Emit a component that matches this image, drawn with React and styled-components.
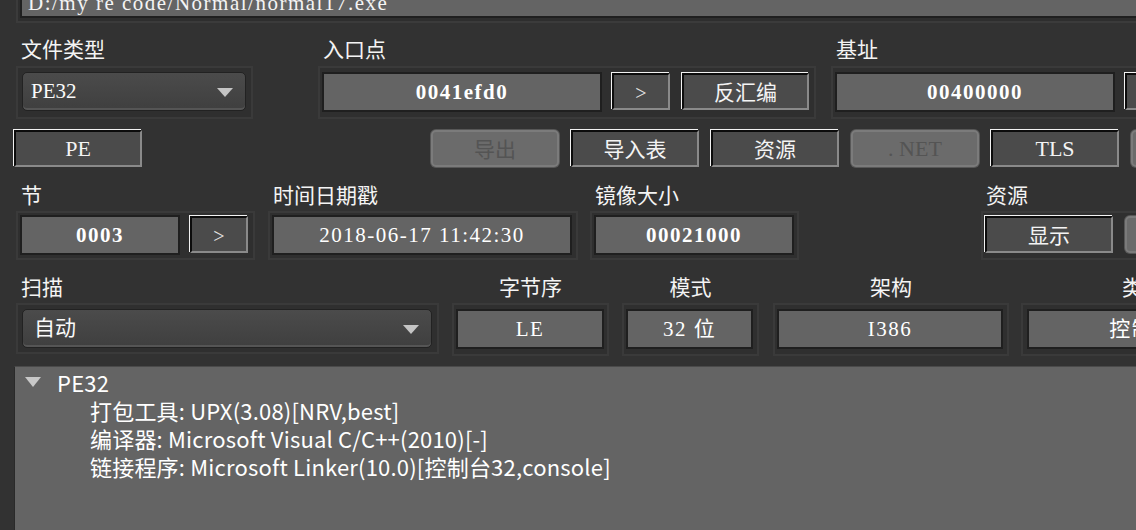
import styled, { createGlobalStyle } from 'styled-components';

const GlobalStyle = createGlobalStyle`
  html, body {
    margin: 0;
    padding: 0;
    background: #323232;
    overflow: hidden;
  }
  body {
    font-family: "Noto Sans CJK SC", "Noto Sans", sans-serif;
    color: #f2f2f2;
  }
`;

const serif = `"Liberation Serif", "Noto Sans CJK SC", serif`;

export default function App() {
  return (
    <Window>
      <GlobalStyle />
      <PathFrame>
        <PathField>D:/my re code/Normal/normal17.exe</PathField>
      </PathFrame>

      <Row $top={8}>
        <Cell $w={237}>
          <Label>文件类型</Label>
          <Frame $pad="4px 5px 6px 4px">
            <Combo>
              PE32
              <Arrow />
            </Combo>
          </Frame>
        </Cell>
        <Cell $w={498} $ml={65}>
          <Label>入口点</Label>
          <Frame $pad="4px 5px 5px 2px">
            <Field $w={280} $bold>0041efd0</Field>
            <Button $w={58} $ml={9}><Chevron>&gt;</Chevron></Button>
            <Button $w={127} $ml={11}>反汇编</Button>
          </Frame>
        </Cell>
        <Cell $w={420} $ml={15}>
          <Label>基址</Label>
          <Frame $pad="4px 5px 5px 2px">
            <Field $w={280} $bold>00400000</Field>
            <Button $w={58} $ml={9}><Chevron>&gt;</Chevron></Button>
          </Frame>
        </Cell>
      </Row>

      <ButtonRow>
        <Button $w={128} $h={37} $latin>PE</Button>
        <Button $w={128} $h={37} $ml={288} disabled>导出</Button>
        <Button $w={128} $h={37} $ml={11}>导入表</Button>
        <Button $w={128} $h={37} $ml={11}>资源</Button>
        <Button $w={128} $h={37} $ml={11} disabled $latin>. NET</Button>
        <Button $w={128} $h={37} $ml={11} $latin>TLS</Button>
        <Button $w={128} $h={37} $ml={11} disabled>调试</Button>
      </ButtonRow>

      <Row $top={10}>
        <Cell $w={239}>
          <Label $h={34}>节</Label>
          <Frame $pad="2px 5px 3px 2px">
            <Field $w={160} $bold>0003</Field>
            <Button $w={58} $ml={9}><Chevron>&gt;</Chevron></Button>
          </Frame>
        </Cell>
        <Cell $w={310} $ml={13}>
          <Label $h={34}>时间日期戳</Label>
          <Frame $pad="2px 4px 3px 2px">
            <Field $w={300}>2018-06-17 11:42:30</Field>
          </Frame>
        </Cell>
        <Cell $w={209} $ml={12}>
          <Label $h={34}>镜像大小</Label>
          <Frame $pad="2px 3px 3px 2px">
            <Field $w={200} $bold>00021000</Field>
          </Frame>
        </Cell>
        <Cell $w={300} $ml={182}>
          <Label $h={34}>资源</Label>
          <Frame $pad="2px 3px 5px 1px">
            <Button $w={128}>显示</Button>
            <Button $w={128} $ml={11} disabled>版本</Button>
          </Frame>
        </Cell>
      </Row>

      <Row $top={9}>
        <Cell $w={423}>
          <Label $h={34}>扫描</Label>
          <Frame $pad="4px 5px 4px 4px">
            <Combo $w={410} $indent={11}>
              自动
              <Arrow />
            </Combo>
          </Frame>
        </Cell>
        <Cell $w={157} $ml={13}>
          <Label $h={34} $center>字节序</Label>
          <Frame $pad="4px 3px 5px 2px">
            <Field $w={148}>LE</Field>
          </Frame>
        </Cell>
        <Cell $w={137} $ml={13}>
          <Label $h={34} $center>模式</Label>
          <Frame $pad="4px 4px 5px 2px">
            <Field $w={127}>32 位</Field>
          </Frame>
        </Cell>
        <Cell $w={236} $ml={14}>
          <Label $h={34} $center>架构</Label>
          <Frame $pad="4px 4px 5px 2px">
            <Field $w={226}>I386</Field>
          </Frame>
        </Cell>
        <Cell $w={244} $ml={12}>
          <Label $h={34} $center>类型</Label>
          <Frame $pad="4px 4px 5px 4px">
            <Field $w={232}>控制台</Field>
          </Frame>
        </Cell>
      </Row>

      <ResultPanel>
        <TreeRow>
          <TreeToggle />
          <span>PE32</span>
        </TreeRow>
        <TreeChild>打包工具: UPX(3.08)[NRV,best]</TreeChild>
        <TreeChild>编译器: Microsoft Visual C/C++(2010)[-]</TreeChild>
        <TreeChild>链接程序: Microsoft Linker(10.0)[控制台32,console]</TreeChild>
      </ResultPanel>
    </Window>
  );
}

const Window = styled.div`
  width: 1400px;
  height: 530px;
  overflow: hidden;
  background: #323232;
`;

const PathFrame = styled.div`
  margin: -26px 0 0 16px;
  width: 1300px;
  padding: 2px 2px 3px 2px;
  border: 2px solid #3b3b3b;
  background: #2e2e2e;
`;

const PathField = styled.div`
  box-sizing: border-box;
  height: 40px;
  padding: 8px 0 0 6px;
  line-height: 30px;
  border: 2px solid #1f1f1f;
  background: #646464;
  font-family: ${serif};
  font-size: 21px;
  letter-spacing: 1.5px;
  color: #f4f4f4;
  white-space: nowrap;
  overflow: hidden;
`;

const Row = styled.div`
  display: flex;
  align-items: flex-start;
  margin-top: ${(p) => p.$top || 0}px;
  margin-left: 16px;
`;

const Cell = styled.div`
  display: flex;
  flex-direction: column;
  flex: none;
  width: ${(p) => p.$w}px;
  margin-left: ${(p) => p.$ml || 0}px;
`;

const Label = styled.div`
  height: ${(p) => p.$h || 35}px;
  line-height: ${(p) => p.$h || 35}px;
  padding-left: ${(p) => (p.$center ? 0 : 5)}px;
  text-align: ${(p) => (p.$center ? 'center' : 'left')};
  font-size: 21px;
  color: #f4f4f4;
  white-space: nowrap;
`;

const Frame = styled.div`
  display: flex;
  align-items: flex-start;
  padding: ${(p) => p.$pad || '4px'};
  border: 2px solid #3a3a3a;
  background: #2f2f2f;
`;

const Field = styled.div`
  flex: none;
  box-sizing: border-box;
  width: ${(p) => p.$w}px;
  height: 40px;
  line-height: 36px;
  border: 2px solid #1f1f1f;
  background: #646464;
  text-align: center;
  font-family: ${serif};
  font-size: 21px;
  font-weight: ${(p) => (p.$bold ? 700 : 400)};
  letter-spacing: 1.5px;
  color: #ffffff;
  white-space: nowrap;
  overflow: hidden;
`;

const Combo = styled.div`
  position: relative;
  box-sizing: border-box;
  width: ${(p) => p.$w || 224}px;
  height: 39px;
  line-height: 37px;
  padding-left: ${(p) => p.$indent || 8}px;
  border: 1px solid #222;
  border-radius: 5px;
  background: linear-gradient(#4b4b4b, #3f3f3f);
  box-shadow: inset 0 -2px 0 #555;
  font-family: ${serif};
  font-size: 21px;
  color: #fafafa;
`;

const Arrow = styled.span`
  position: absolute;
  right: 12px;
  top: 15px;
  width: 0;
  height: 0;
  border-left: 8px solid transparent;
  border-right: 8px solid transparent;
  border-top: 9px solid #c4c4c4;
`;

const ButtonRow = styled.div`
  display: flex;
  margin: 10px 0 0 13px;
`;

const Button = styled.button`
  flex: none;
  box-sizing: border-box;
  width: ${(p) => p.$w}px;
  height: ${(p) => p.$h || 37}px;
  margin: 1px 0 0 ${(p) => (p.$ml || 0) + 1}px;
  padding: 0;
  border: 2px solid;
  border-color: #0c0c0c #8a8a8a #8a8a8a #0c0c0c;
  box-shadow: -1px -1px 0 #f2f2f2;
  background: #4b4b4b;
  color: #f4f4f4;
  font-family: ${(p) => (p.$latin ? serif : `"Noto Sans CJK SC", sans-serif`)};
  font-size: ${(p) => (p.$latin ? 22 : 21)}px;
  line-height: 1;
  cursor: default;

  &:disabled {
    border: 2px solid #7b7b7b;
    border-radius: 5px;
    box-shadow: 0 0 0 1px #575757;
    background: #6b6b6b;
    color: #545454;
  }
`;

const Chevron = styled.span`
  font-family: ${serif};
  font-size: 20px;
  color: #e6e6e6;
`;

const ResultPanel = styled.div`
  margin: 10px 0 0 14px;
  height: 200px;
  padding-top: 1px;
  border-top: 1px solid #4a4a4a;
  border-left: 1px solid #2a2a2a;
  background: #646464;
  font-family: "Noto Sans CJK SC", "Noto Sans", sans-serif;
  font-size: 22px;
  letter-spacing: 0.2px;
  line-height: 28px;
  color: #ffffff;
`;

const TreeRow = styled.div`
  display: flex;
  align-items: center;
  padding-left: 10px;
  gap: 16px;
`;

const TreeToggle = styled.span`
  width: 0;
  height: 0;
  border-left: 8px solid transparent;
  border-right: 8px solid transparent;
  border-top: 10px solid #c8c8c8;
`;

const TreeChild = styled.div`
  padding-left: 75px;
  white-space: nowrap;
`;
